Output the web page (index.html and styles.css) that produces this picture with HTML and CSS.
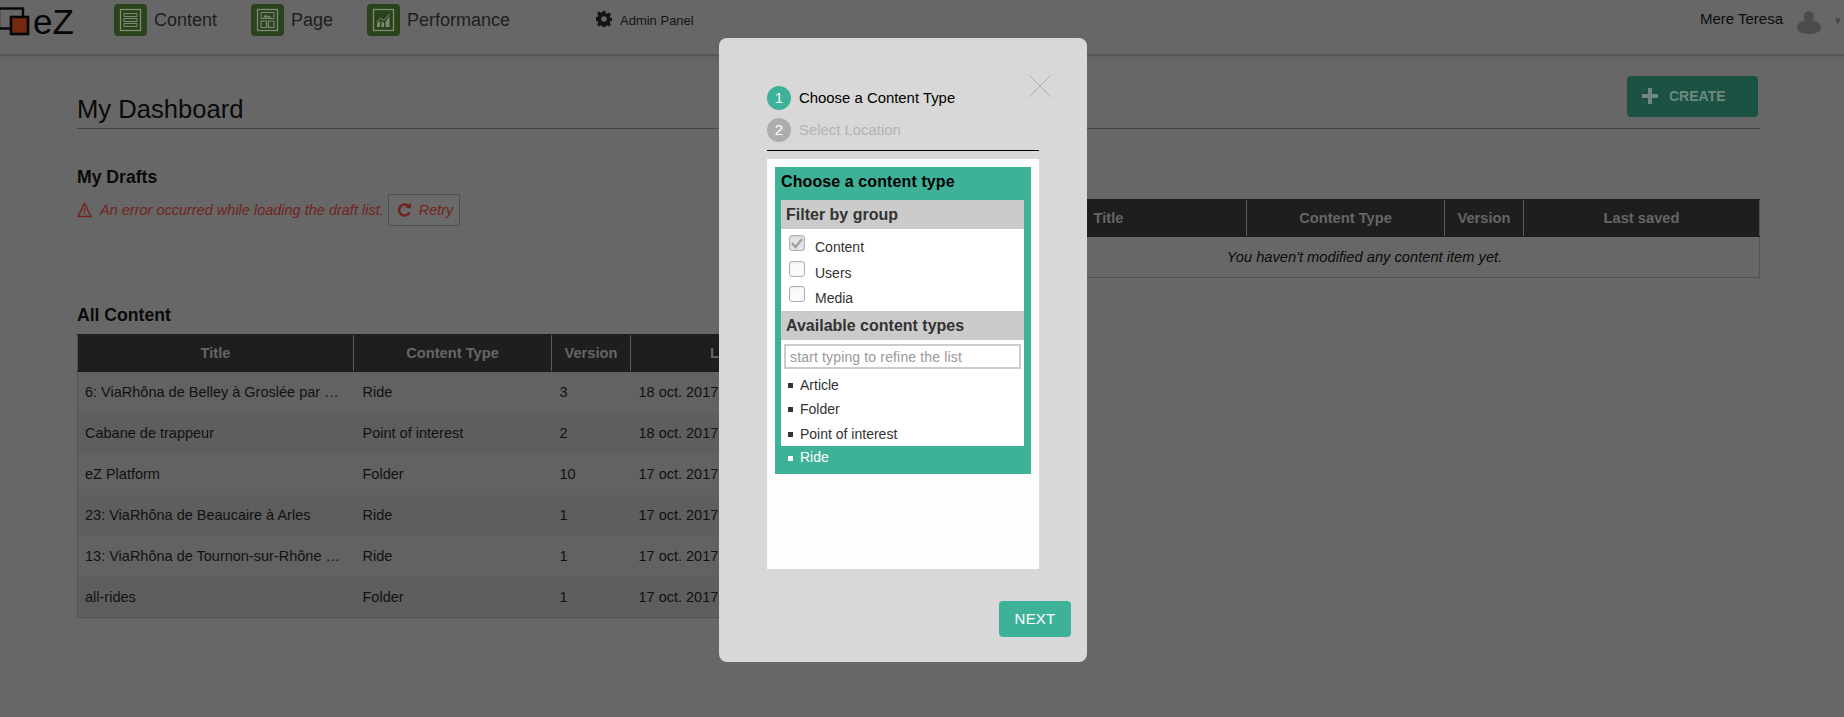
FILE: index.html
```html
<!DOCTYPE html>
<html lang="en">
<head>
<meta charset="utf-8">
<title>My Dashboard</title>
<link rel="stylesheet" href="styles.css">
</head>
<body>
<header class="topbar">
  <div class="logo">
    <svg class="logo-mark" width="30" height="36" viewBox="0 0 30 36"><rect x="-1" y="8.500" width="24" height="20" fill="none" stroke="#060606" stroke-width="2.400"/><rect x="11" y="17" width="17" height="17" fill="#722a12" stroke="#060606" stroke-width="2.600"/></svg>
    <span class="logo-text">eZ</span>
  </div>
  <nav class="nav">
    <a class="nav-item nav-content"><span class="nav-icon"><svg width="33" height="32" viewBox="0 0 33 32"><rect x="6.500" y="5.500" width="20" height="21" fill="none" stroke="#7e8a78" stroke-width="1.300"/><path d="M10 9.500h13v3H10zM10 14.500h13v3H10zM10 19.500h13v3H10z" fill="none" stroke="#7e8a78" stroke-width="1"/></svg></span>Content</a>
    <a class="nav-item nav-page"><span class="nav-icon"><svg width="33" height="32" viewBox="0 0 33 32"><rect x="6.500" y="5.500" width="20" height="21" fill="none" stroke="#7e8a78" stroke-width="1.300"/><path d="M10 8.500h13v6H10z" fill="none" stroke="#7e8a78"/><path d="M12 13.500l2.500-3 2 2 1.500-1 3 2z" fill="#7e8a78"/><path d="M10 17h5.500v6.500H10zM17.500 17H23v6.500h-5.500z" fill="none" stroke="#7e8a78" stroke-width="1.200"/></svg></span>Page</a>
    <a class="nav-item nav-perf"><span class="nav-icon"><svg width="33" height="32" viewBox="0 0 33 32"><rect x="6.500" y="5.500" width="20" height="21" fill="none" stroke="#7e8a78" stroke-width="1.300"/><path d="M10 23v-4l3-2v6zM14.500 23v-6l2.500 2v4zM18.500 23v-5l4-6v11z" fill="#7e8a78"/><path d="M9.500 18l4-4 3.500 2.500 6-7" fill="none" stroke="#7e8a78" stroke-width="1"/></svg></span>Performance</a>
    <a class="admin">
      <svg class="gear" width="16" height="16" viewBox="0 0 16 16"><path fill="#141414" fill-rule="evenodd" d="M6.600 0h2.800l.4 2.200 1.300.6 1.900-1.300 2 2-1.300 1.900.6 1.300 2.200.4v2.800l-2.200.4-.6 1.300 1.300 1.900-2 2-1.900-1.300-1.300.6-.4 2.200H6.600l-.4-2.200-1.300-.6L3 15.500l-2-2 1.300-1.900-.6-1.300L-.5 9.900V6.100l2.200-.4.6-1.300L1 2.500l2-2 1.900 1.300 1.300-.6zM8 5.200a2.800 2.800 0 1 0 0 5.600 2.800 2.800 0 0 0 0-5.600z"/></svg>
      Admin Panel
    </a>
  </nav>
  <div class="user">
    <span class="user-name">Mere Teresa</span>
    <svg class="avatar" width="24" height="23" viewBox="0 0 24 23"><ellipse cx="12" cy="5.500" rx="5" ry="5.500" fill="#4c4c4c"/><path d="M0 17c0-5 5-8 12-8s12 3 12 8c0 3.500-5 6-12 6S0 20.500 0 17z" fill="#4c4c4c"/></svg>
    <span class="caret">▾</span>
  </div>
</header>

<main class="page">
  <div class="page-head">
    <h1 class="page-title">My Dashboard</h1>
    <button class="create"><svg width="16" height="18" viewBox="0 0 16 18"><path d="M6 1h4v6h6v4h-6v6H6v-6H0V7h6z" fill="#6e8a80"/></svg>CREATE</button>
  </div>

  <div class="panels">
    <section class="drafts">
      <h2 class="section-title">My Drafts</h2>
      <div class="error">
        <svg width="15" height="16" viewBox="0 0 15 16"><path d="M7.500 1.500L14 14.500H1z" fill="none" stroke="#72241e" stroke-width="1.500"/><path d="M6.900 6h1.200v4.500H6.900zM6.900 11.500h1.200v1.300H6.900z" fill="#72241e"/></svg>
        <span class="error-text">An error occurred while loading the draft list.</span>
        <button class="retry"><svg width="15" height="16" viewBox="0 0 15 16"><path d="M12.500 10.500A5.500 5.500 0 1 1 11 3.700" fill="none" stroke="#72241e" stroke-width="2.600"/><path d="M8 5.500L14 6.500V0.500z" fill="#72241e"/></svg>Retry</button>
      </div>
    </section>
    <section class="modified">
      <table class="grid">
        <thead><tr><th class="c-title">Title</th><th class="c-type">Content Type</th><th class="c-ver">Version</th><th>Last saved</th></tr></thead>
        <tbody><tr><td colspan="4" class="empty">You haven't modified any content item yet.</td></tr></tbody>
      </table>
    </section>
  </div>

  <section class="all">
    <h2 class="section-title">All Content</h2>
    <table class="grid">
      <thead><tr><th class="c-title">Title</th><th class="c-type">Content Type</th><th class="c-ver">Version</th><th>Last saved</th></tr></thead>
      <tbody>
        <tr><td>6: ViaRhôna de Belley à Groslée par …</td><td>Ride</td><td>3</td><td>18 oct. 2017</td></tr>
        <tr><td>Cabane de trappeur</td><td>Point of interest</td><td>2</td><td>18 oct. 2017</td></tr>
        <tr><td>eZ Platform</td><td>Folder</td><td>10</td><td>17 oct. 2017</td></tr>
        <tr><td>23: ViaRhôna de Beaucaire à Arles</td><td>Ride</td><td>1</td><td>17 oct. 2017</td></tr>
        <tr><td>13: ViaRhôna de Tournon-sur-Rhône …</td><td>Ride</td><td>1</td><td>17 oct. 2017</td></tr>
        <tr><td>all-rides</td><td>Folder</td><td>1</td><td>17 oct. 2017</td></tr>
      </tbody>
    </table>
  </section>
</main>

<div class="modal">
  <svg class="close" width="24" height="24" viewBox="0 0 24 24"><path d="M1 1l22 22M23 1L1 23" stroke="#aeaeae" stroke-width="1" fill="none"/></svg>
  <ol class="steps">
    <li class="step step-on"><span class="step-num">1</span><span class="step-label">Choose a Content Type</span></li>
    <li class="step step-off"><span class="step-num">2</span><span class="step-label">Select Location</span></li>
  </ol>
  <div class="sheet">
    <div class="chooser">
      <h3 class="chooser-title">Choose a content type</h3>
      <div class="chooser-body">
        <h4 class="group-title">Filter by group</h4>
        <ul class="groups">
          <li class="group"><span class="check check-on"><svg width="16" height="16" viewBox="0 0 16 16"><path d="M3 8l3.500 4L13 4" fill="none" stroke="#a4a4a4" stroke-width="2.500"/></svg></span><span class="group-label">Content</span></li>
          <li class="group"><span class="check"></span><span class="group-label">Users</span></li>
          <li class="group"><span class="check"></span><span class="group-label">Media</span></li>
        </ul>
        <h4 class="group-title">Available content types</h4>
        <div class="filter"><input class="filter-input" type="text" placeholder="start typing to refine the list"></div>
        <ul class="types">
          <li class="type">Article</li>
          <li class="type">Folder</li>
          <li class="type">Point of interest</li>
          <li class="type type-on">Ride</li>
        </ul>
      </div>
    </div>
  </div>
  <div class="modal-foot"><button class="next">NEXT</button></div>
</div>
</body>
</html>
```
FILE: styles.css
```css
* { box-sizing: border-box; }
html, body { margin: 0; padding: 0; height: 100%; }
body {
  background: #676767;
  font-family: "Liberation Sans", Arial, sans-serif;
  color: #121212;
  overflow: hidden;
  position: relative;
}
h1, h2, h3, h4, ul, ol { margin: 0; padding: 0; list-style: none; }
button { font-family: inherit; }

.topbar {
  height: 56px;
  display: flex;
  align-items: flex-start;
  border-bottom: 2px solid #565656;
  box-shadow: 0 3px 6px rgba(0,0,0,.05);
}
.logo { width: 114px; height: 36px; display: flex; align-items: flex-start; }
.logo-mark { flex: none; }
.logo-text { font-size: 35px; line-height: 44px; margin: 0 0 0 3px; color: #060606; }
.nav { display: flex; align-items: flex-start; padding-top: 4px; }
.nav-item { display: flex; align-items: center; font-size: 18px; color: #1e1e1e; height: 32px; }
.nav-icon { width: 33px; height: 32px; border-radius: 4px; background: #2a431b; margin-right: 7px; display: block; }
.nav-icon svg { display: block; }
.nav-content { width: 137px; }
.nav-page { width: 116px; }
.nav-perf { width: 229px; }
.admin { display: flex; align-items: center; font-size: 13px; color: #141414; height: 32px; padding-top: 1px; }
.gear { margin-right: 8px; margin-top: -3px; }
.user { margin-left: auto; display: flex; align-items: flex-start; padding-top: 11px; padding-right: 1px; }
.user-name { font-size: 15px; color: #0c0c0c; margin-right: 14px; line-height: 16px; }
.caret { font-size: 11px; color: #444; margin-left: 14px; line-height: 18px; width: 8px; }

.page { padding: 20px 84px 0 77px; }
.page-head {
  height: 53px;
  display: flex;
  justify-content: space-between;
  align-items: flex-start;
  border-bottom: 1px solid #454545;
}
.page-title { font-size: 25.600px; font-weight: 400; line-height: 30px; padding-top: 18px; color: #0a0a0a; }
.create {
  width: 131px; height: 41px; margin: 0 2px 0 0;
  background: #1b5244; border: 0; border-radius: 4px;
  color: #6e8a80; font-size: 14px; font-weight: 700;
  display: flex; align-items: center; padding: 0 0 2px 15px; gap: 11px;
}
.panels { display: grid; grid-template-columns: 789px 790px; column-gap: 104px; height: 176px; }
.drafts { padding-top: 38px; }
.section-title { font-size: 17.600px; font-weight: 700; line-height: 20px; color: #0a0a0a; }
.error { display: flex; align-items: center; margin-top: 7px; font-size: 14.500px; font-style: italic; color: #72241e; }
.error svg { flex: none; }
.error-text { margin: 0 4px 0 8px; }
.retry {
  width: 72px; height: 32px; display: flex; align-items: center; gap: 7px;
  padding: 0 0 0 8px; font-size: 14.500px; font-style: italic; color: #72241e;
  background: #6a6a6a; border: 1px solid #4e4e4e; border-radius: 2px;
}
.modified { padding-top: 70px; }
.grid { width: 100%; border-collapse: collapse; table-layout: fixed; font-size: 14.500px; border: 1px solid #525252; border-top: 0; }
.grid th {
  height: 37px; background: #1e1e1e; color: #666; font-size: 14.700px; font-weight: 700;
  text-align: center; border-left: 1px solid #5c5c5c; padding: 0;
  border-top: 1px solid #1e1e1e; border-bottom: 1px solid #1e1e1e;
}
.grid th:first-child { border-left: 0; }
.c-title { width: 276px; }
.c-type { width: 198px; }
.c-ver { width: 79px; }
.grid td { height: 41px; padding: 0 8px; color: #111; white-space: nowrap; }
.grid td:nth-child(2) { padding-left: 9px; }
.grid td:first-child { padding-left: 7px; }
.grid tbody tr:nth-child(odd) td { background: #626262; }
.grid tbody tr:nth-child(even) td { background: #5e5e5e; }
.modified .grid tbody tr td.empty { height: 41px; text-align: center; font-style: italic; background: #676767; color: #0a0a0a; font-size: 14.700px; }
.all { width: 789px; }
.all .section-title { margin-bottom: 9px; }

.modal {
  position: absolute; left: 719px; top: 38px; width: 368px; height: 624px;
  background: #d8d8d8; border-radius: 8px; padding: 48px 48px 0;
}
.close { position: absolute; left: 309px; top: 36px; }
.steps { height: 65px; border-bottom: 1px solid #000; }
.step { display: flex; align-items: center; height: 24px; font-size: 14.900px; margin-bottom: 8px; }
.step-label { padding-bottom: 1px; }
.step-num { width: 24px; height: 24px; border-radius: 50%; color: #fff; font-size: 15px; text-align: center; line-height: 24px; margin-right: 8px; }
.step-on { color: #000; }
.step-on .step-num { background: #3eb298; }
.step-off { color: #b4b4b4; }
.step-off .step-num { background: #adadad; }
.sheet { margin-top: 8px; height: 410px; background: #fdfdfd; padding: 8px; }
.chooser { background: #3eb298; height: 307px; padding: 0 7px 0 6px; }
.chooser-title { font-size: 16px; font-weight: 700; line-height: 30px; height: 33px; color: #000; letter-spacing: .1px; }
.chooser-body { height: 246px; background: #fff; }
.group-title { background: #cbcbcb; color: #333; font-size: 16px; font-weight: 700; height: 29px; line-height: 30px; padding-left: 5px; }
.groups { height: 82px; padding: 6px 0 0 8px; }
.group { display: flex; height: 25.500px; font-size: 14px; color: #333; align-items: flex-start; }
.group-label { margin-top: 4px; }
.check {
  width: 16px; height: 16px; margin-right: 10px; flex: none;
  border: 1px solid #b0b0b0; border-radius: 3px; background: #fafafa;
  box-shadow: inset 0 1px 2px rgba(0,0,0,.08);
}
.check svg { display: block; margin: -1px; }
.check-on { background: #e4e4e4; }
.filter { padding: 4px 3px 0; }
.filter-input {
  display: block; width: 237px; height: 25px; border: 2px solid #ccc; background: #fff;
  font: 14px "Liberation Sans", Arial, sans-serif; letter-spacing: .15px; padding: 0 4px; outline: none; color: #333;
}
.filter-input::placeholder { color: #999; opacity: 1; }
.types { padding-top: 3.500px; }
.type { height: 24.500px; line-height: 24.500px; font-size: 14px; color: #333; padding-left: 19px; position: relative; }
.type::before { content: ""; position: absolute; left: 7px; top: 10px; width: 5px; height: 5px; background: #333; }
.type-on { color: #fff; background: #3eb298; margin: 0 -7px 0 -6px; padding-left: 25px; line-height: 23px; }
.type-on::before { background: #fff; left: 13px; }
.modal-foot { display: flex; justify-content: flex-end; margin: 32px -32px 0 0; }
.next { width: 72px; height: 36px; background: #3eb298; border: 0; border-radius: 4px; color: #fff; font-size: 15px; padding: 0 0 2px; letter-spacing: .2px; }
```
